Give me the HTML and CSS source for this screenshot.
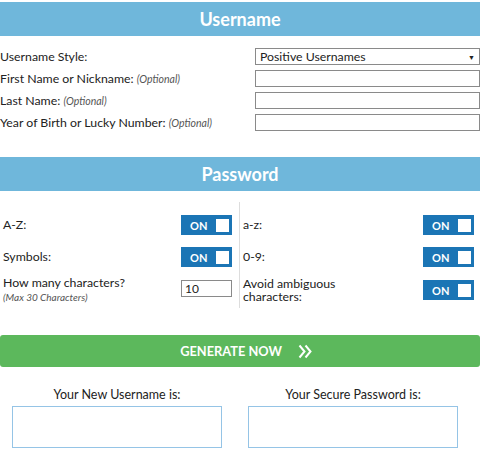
FILE: index.html
```html
<!DOCTYPE html>
<html>
<head>
<meta charset="utf-8">
<link rel="stylesheet" href="styles.css">
</head>
<body>
<div class="page">
  <div class="bar">Username</div>
  <div class="ufields">
    <div class="urow">
      <div class="ulabel">Username Style:</div>
      <div class="select"><span>Positive Usernames</span><span class="arrow">▼</span></div>
    </div>
    <div class="urow">
      <div class="ulabel">First Name or Nickname: <i>(Optional)</i></div>
      <div class="input"></div>
    </div>
    <div class="urow">
      <div class="ulabel">Last Name: <i>(Optional)</i></div>
      <div class="input"></div>
    </div>
    <div class="urow">
      <div class="ulabel">Year of Birth or Lucky Number: <i>(Optional)</i></div>
      <div class="input"></div>
    </div>
  </div>

  <div class="bar bar2">Password</div>
  <div class="pgrid">
    <div class="pcol left">
      <div class="prow r1"><div class="plabel">A-Z:</div><div class="toggle"><span>ON</span><b></b></div></div>
      <div class="prow r2"><div class="plabel">Symbols:</div><div class="toggle"><span>ON</span><b></b></div></div>
      <div class="prow r3"><div class="plabel">How many characters?<br><i>(Max 30 Characters)</i></div><div class="num">10</div></div>
    </div>
    <div class="pcol right">
      <div class="prow r1"><div class="plabel">a-z:</div><div class="toggle"><span>ON</span><b></b></div></div>
      <div class="prow r2"><div class="plabel">0-9:</div><div class="toggle"><span>ON</span><b></b></div></div>
      <div class="prow r3"><div class="plabel">Avoid ambiguous<br>characters:</div><div class="toggle"><span>ON</span><b></b></div></div>
    </div>
  </div>

  <div class="gen"><span>GENERATE NOW</span><svg class="chev" width="14" height="15" viewBox="0 0 14 15"><path d="M1.5 1.5 L6.5 7.5 L1.5 13.5 M7.5 1.5 L12.5 7.5 L7.5 13.5" fill="none" stroke="#fff" stroke-width="2"/></svg></div>

  <div class="results">
    <div class="res">
      <div class="rtitle">Your New Username is:</div>
      <div class="rbox"></div>
    </div>
    <div class="res">
      <div class="rtitle">Your Secure Password is:</div>
      <div class="rbox"></div>
    </div>
  </div>
</div>
</body>
</html>
```
FILE: styles.css
```css
* { box-sizing: border-box; }
body {
  margin: 0;
  font-family: Lato, "Open Sans", sans-serif;
  font-size: 12px;
  color: #222;
  background: #fff;
}
.page { width: 480px; padding-top: 2px; }
.bar {
  height: 34px;
  background: #6fb7db;
  color: #fff;
  font-weight: bold;
  font-size: 18px;
  display: flex;
  align-items: center;
  justify-content: center;
}
.bar2 { margin-top: 26px; }
.ufields { padding-top: 12px; display: flex; flex-direction: column; gap: 5px; }
.urow { display: flex; align-items: center; justify-content: space-between; height: 17px; }
.ulabel { font-size: 12.3px; }
.ulabel i { color: #555; font-size: 10.5px; }
.select, .input {
  width: 225px;
  height: 17px;
  border: 1px solid #8a8a8a;
  background: #fff;
}
.select {
  display: flex;
  align-items: center;
  justify-content: space-between;
  padding: 0 4px;
  font-size: 12.3px;
}
.select .arrow { font-size: 7px; color: #222; }
.pgrid { display: flex; margin-top: 11px; }
.pcol { width: 240px; padding-top: 13px; padding-bottom: 8px; }
.pcol.left { padding-left: 3px; padding-right: 7px; border-right: 1px solid #ddd; }
.pcol.right { padding-left: 3px; padding-right: 6px; }
.prow { display: flex; align-items: center; justify-content: space-between; }
.r1 { height: 20px; }
.r2 { height: 20px; margin-top: 12px; }
.r3 { height: 20px; margin-top: 13px; }
.plabel { font-size: 12.3px; line-height: 13.5px; }
.plabel i { color: #555; font-size: 10px; }
.toggle {
  width: 51px;
  height: 20px;
  background: #1b75b5;
  display: flex;
  align-items: center;
  justify-content: space-between;
  padding: 0 3px 0 9px;
  color: #fff;
  font-weight: bold;
  font-size: 11px;
}
.toggle b { width: 13px; height: 13px; background: #fff; display: block; }
.num {
  width: 51px;
  height: 17px;
  border: 1px solid #8a8a8a;
  padding-left: 3px;
  font-size: 12px;
  line-height: 15px;
  margin-top: -3px;
}
.gen {
  margin-top: 27px;
  height: 32px;
  background: #5cb85c;
  border-radius: 3px;
  color: #fff;
  font-weight: bold;
  font-size: 12.8px;
  display: flex;
  align-items: center;
  justify-content: center;
  padding-left: 12px;
}
.chev { margin-left: 16px; display: block; }
.results { display: flex; margin-top: 20px; padding-left: 12px; gap: 26px; }
.res { width: 210px; display: flex; flex-direction: column; align-items: center; }
.rtitle { font-size: 12.5px; height: 16px; }
.rbox { width: 210px; height: 42px; border: 1px solid #95c4e6; margin-top: 3px; }
```
